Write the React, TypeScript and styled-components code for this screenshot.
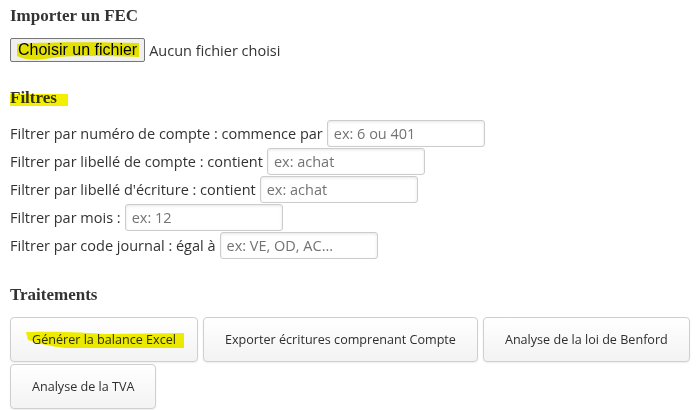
import React from 'react';
import styled, { createGlobalStyle } from 'styled-components';

const GlobalStyle = createGlobalStyle`
    html, body {
        margin: 0;
        padding: 0;
        background: #ffffff;
    }
    body {
        font-family: 'Open Sans', 'Noto Sans', sans-serif;
        color: #333333;
    }
`;

const Page = styled.div`
    padding: 6px 0 0 10px;
    width: 698px;
    height: 410px;
    box-sizing: border-box;
    overflow: hidden;
`;

const Section = styled.section`
    margin-bottom: 26px;
`;

const Heading = styled.h3`
    margin: 0 0 12px;
    font-family: 'Liberation Serif', 'DejaVu Serif', serif;
    font-weight: bold;
    font-size: 17px;
    line-height: 20px;
    color: #333333;
`;

const Marked = styled.span`
    position: relative;
    display: inline-block;
`;

const Ink = styled.svg`
    position: absolute;
    pointer-events: none;
    mix-blend-mode: multiply;
`;

const FileRow = styled.div`
    display: flex;
    align-items: center;
    gap: 4px;
`;

const FileButton = styled.button`
    height: 24px;
    padding: 0 7px;
    font-family: 'Liberation Sans', Arial, sans-serif;
    font-size: 16px;
    color: #000000;
    background: #efefef;
    border: 1px solid #767676;
    border-radius: 2px;
`;

const FileStatus = styled.span`
    font-size: 14.5px;
    color: #333333;
`;

const Filters = styled.div`
    display: flex;
    flex-direction: column;
    gap: 1px;
`;

const FilterRow = styled.label`
    display: flex;
    align-items: center;
    gap: 4px;
    font-size: 14.5px;
    height: 27px;
`;

const TextInput = styled.input`
    width: 158px;
    height: 27px;
    box-sizing: border-box;
    padding: 0 6px;
    font-family: 'Open Sans', 'Noto Sans', sans-serif;
    font-size: 14.5px;
    color: #333333;
    background: #ffffff;
    border: 1px solid #cccccc;
    border-radius: 3px;
    box-shadow: inset 0 1px 3px rgba(0, 0, 0, 0.1);

    &::placeholder {
        color: #737373;
    }
`;

const Actions = styled.div`
    display: flex;
    flex-wrap: wrap;
    column-gap: 5px;
    row-gap: 2px;
`;

const ActionButton = styled.button`
    height: 45px;
    padding: 0 21px;
    font-family: 'Open Sans', 'Noto Sans', sans-serif;
    font-size: 12.6px;
    color: #2e2e2e;
    background: linear-gradient(#ffffff, #f3f3f3);
    border: 1px solid #cfcfcf;
    border-radius: 4px;
    box-shadow: 0 1px 2px rgba(0, 0, 0, 0.07);
`;

const filters = [
    { label: 'Filtrer par numéro de compte : commence par', placeholder: 'ex: 6 ou 401' },
    { label: 'Filtrer par libellé de compte : contient', placeholder: 'ex: achat' },
    { label: "Filtrer par libellé d'écriture : contient", placeholder: 'ex: achat' },
    { label: 'Filtrer par mois :', placeholder: 'ex: 12' },
    { label: 'Filtrer par code journal : égal à', placeholder: 'ex: VE, OD, AC...' },
];

const YELLOW = '#f2f000';

const App = () => (
    <Page>
        <GlobalStyle />
        <Section>
            <Heading>Importer un FEC</Heading>
            <FileRow>
                <FileButton type="button">
                    <Marked>
                        Choisir un fichier
                        <Ink
                            width="126"
                            height="22"
                            viewBox="0 0 126 22"
                            style={{ left: -3, top: -2 }}
                        >
                            <path
                                d="M2 5 C30 3 80 3 124 4 L124 18 C90 17 50 16 30 20 C18 22 8 20 2 17 Z"
                                fill={YELLOW}
                            />
                        </Ink>
                    </Marked>
                </FileButton>
                <FileStatus>Aucun fichier choisi</FileStatus>
            </FileRow>
        </Section>

        <Section>
            <Heading>
                <Marked>
                    Filtres
                    <Ink width="58" height="12" viewBox="0 0 58 12" style={{ left: 0, top: 6 }}>
                        <rect x="0" y="0" width="58" height="12" fill={YELLOW} />
                    </Ink>
                </Marked>
            </Heading>
            <Filters>
                {filters.map(f => (
                    <FilterRow key={f.label}>
                        {f.label}
                        <TextInput type="text" placeholder={f.placeholder} />
                    </FilterRow>
                ))}
            </Filters>
        </Section>

        <Section>
            <Heading>Traitements</Heading>
            <Actions>
                <ActionButton type="button">
                    <Marked>
                        Générer la balance Excel
                        <Ink
                            width="160"
                            height="20"
                            viewBox="0 0 160 20"
                            style={{ left: -6, top: -1 }}
                        >
                            <path
                                d="M0 2 C40 1 60 3 80 4 L158 3 L158 18 L40 18 C20 16 8 12 2 10 Z"
                                fill={YELLOW}
                            />
                        </Ink>
                    </Marked>
                </ActionButton>
                <ActionButton type="button">Exporter écritures comprenant Compte</ActionButton>
                <ActionButton type="button">Analyse de la loi de Benford</ActionButton>
                <ActionButton type="button">Analyse de la TVA</ActionButton>
            </Actions>
        </Section>
    </Page>
);

export default App;
